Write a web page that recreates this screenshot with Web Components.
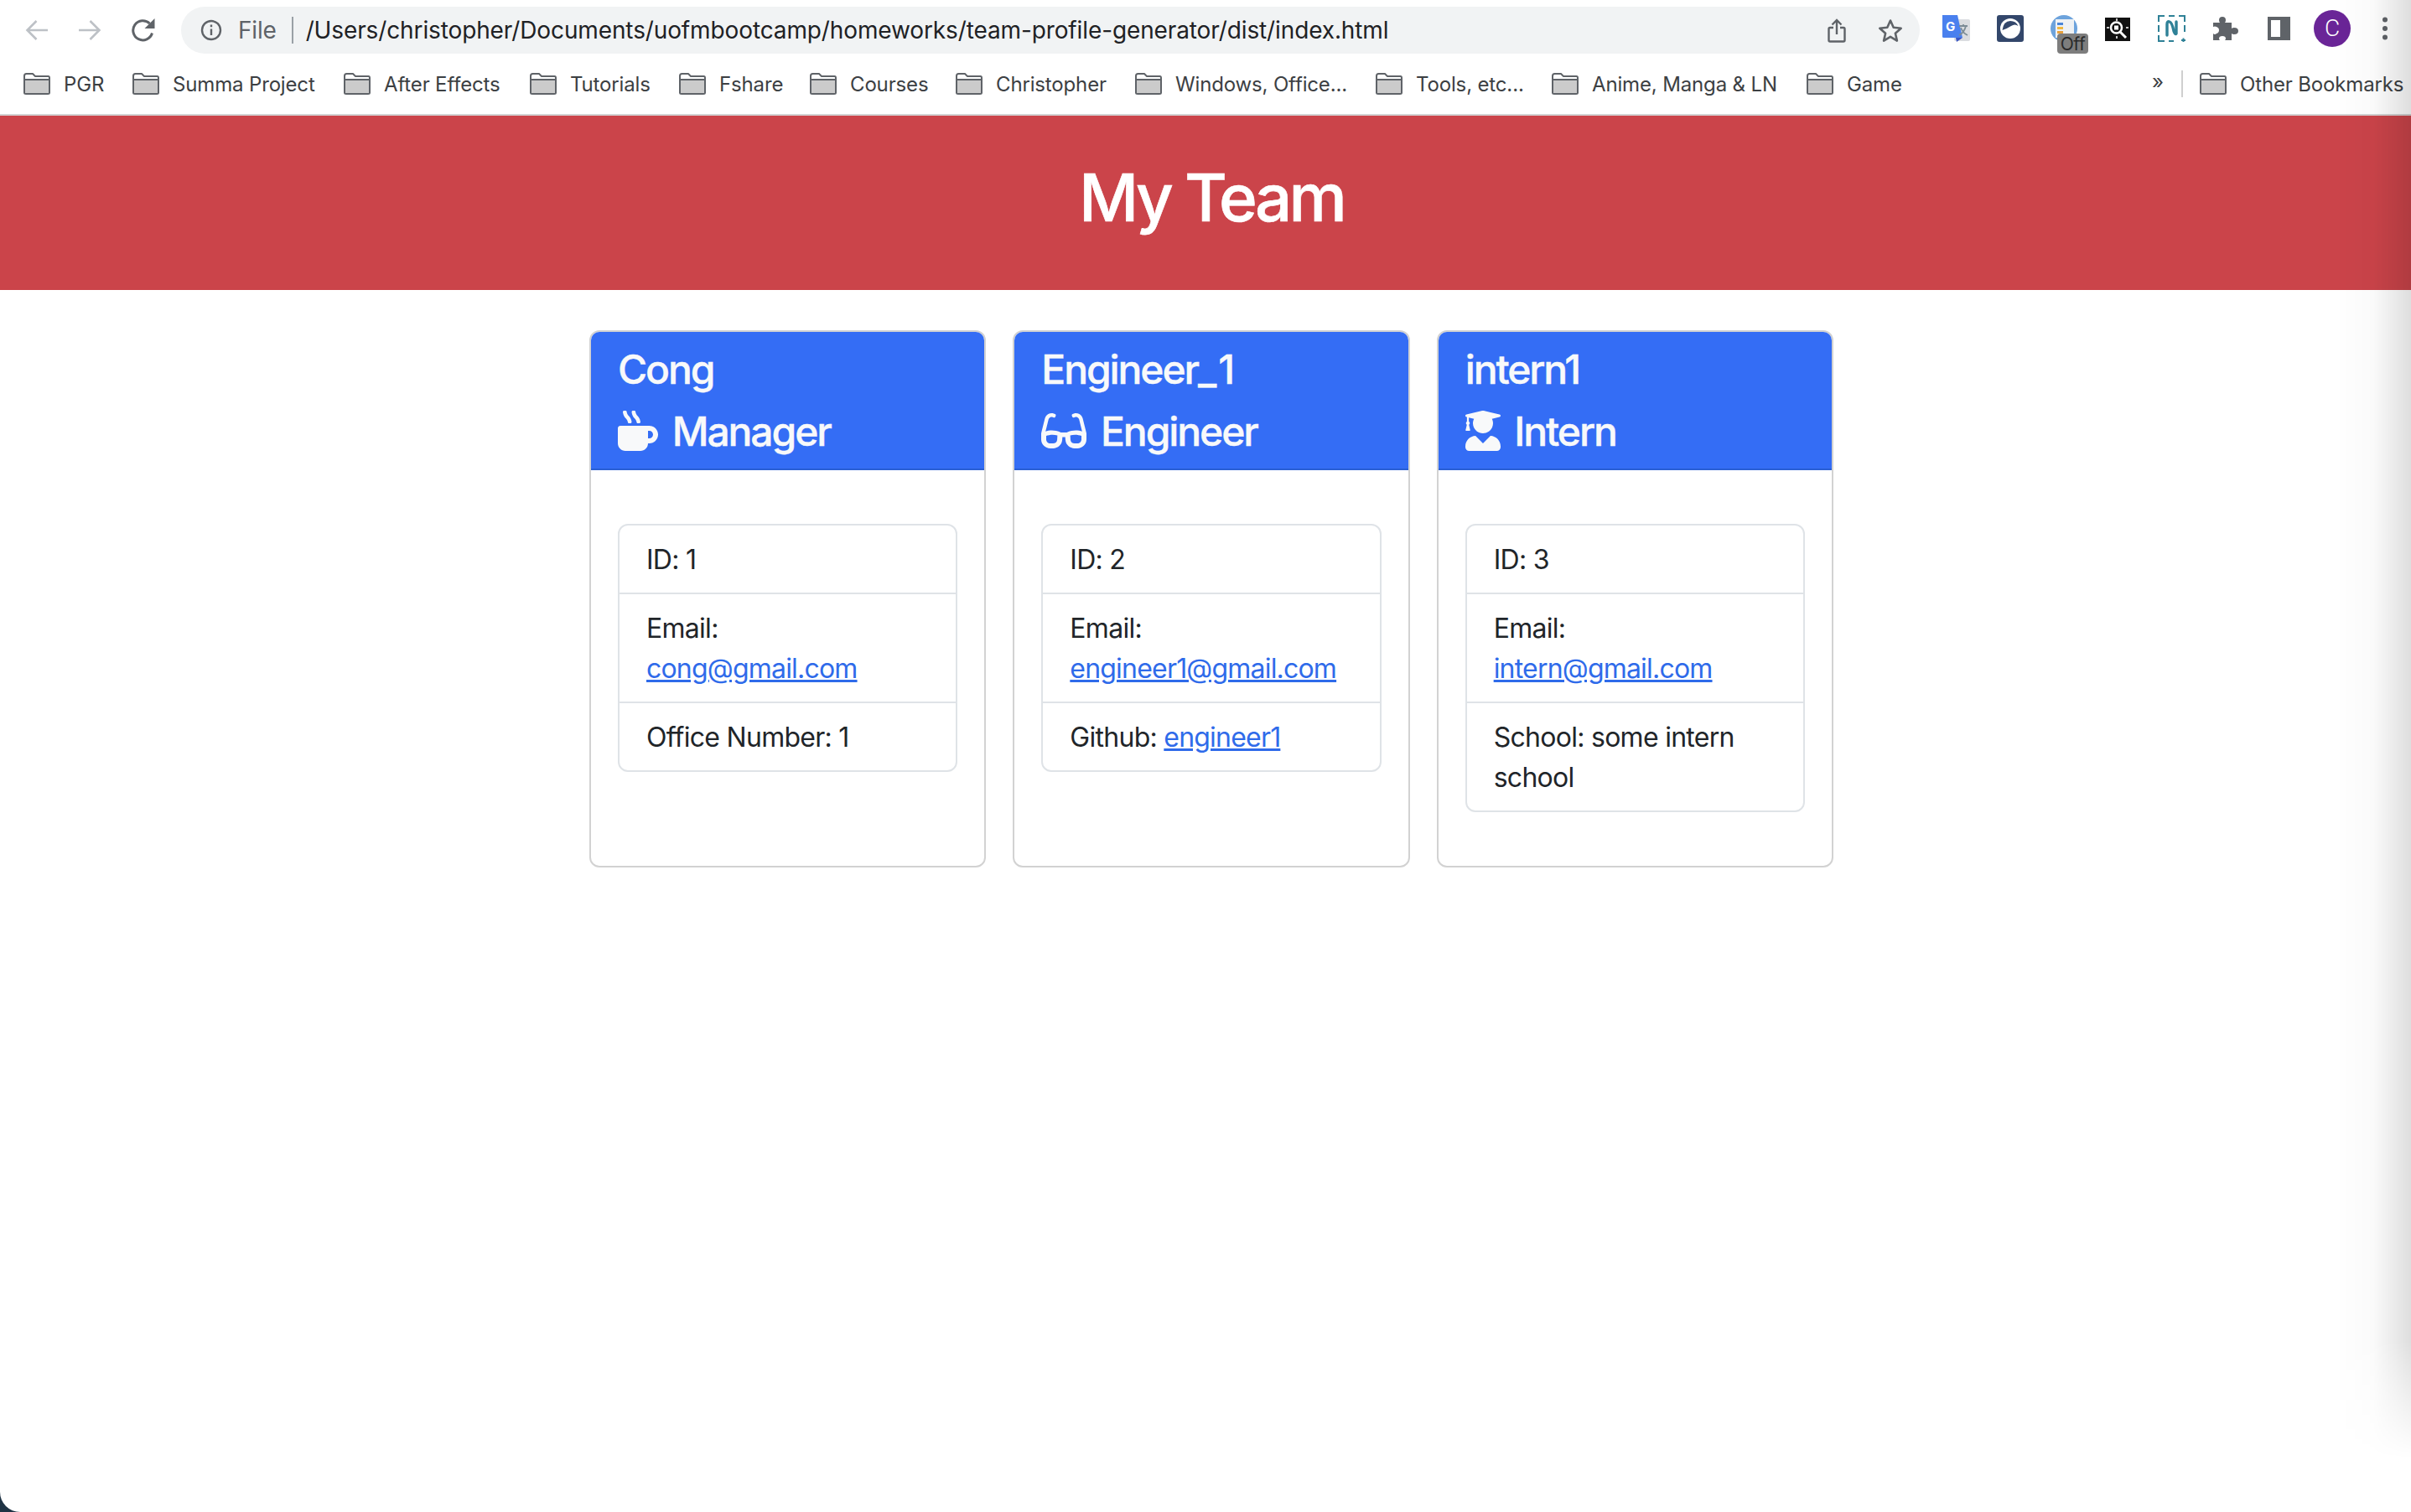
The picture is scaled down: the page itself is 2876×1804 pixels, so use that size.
<!DOCTYPE html>
<html>
<head>
<meta charset="utf-8">
<title>My Team</title>
<style>
  html, body { margin: 0; padding: 0; height: 100%; background: #1f3344; overflow: hidden; }
  body { font-family: Inter, "Liberation Sans", sans-serif; }
</style>
</head>
<body>
<app-window>
  <browser-bar slot="bar"></browser-bar>
  <team-page>
    <team-card name="Cong" role="Manager" icon="mug">
      <info-item>ID: 1</info-item>
      <info-item>Email: <a href="#">cong@gmail.com</a></info-item>
      <info-item>Office Number: 1</info-item>
    </team-card>
    <team-card name="Engineer_1" role="Engineer" icon="glasses">
      <info-item>ID: 2</info-item>
      <info-item>Email: <a href="#">engineer1@gmail.com</a></info-item>
      <info-item>Github: <a href="#">engineer1</a></info-item>
    </team-card>
    <team-card name="intern1" role="Intern" icon="grad">
      <info-item>ID: 3</info-item>
      <info-item>Email: <a href="#">intern@gmail.com</a></info-item>
      <info-item>School: some intern school</info-item>
    </team-card>
  </team-page>
</app-window>

<script>
// rounded mac window, with the shadow over the right edge
class AppWindow extends HTMLElement {
  constructor() {
    super();
    this.attachShadow({ mode: "open" });
    this.shadowRoot.innerHTML = `
      <style>
        :host { display: block; height: 1804px; width: 2876px; position: relative; overflow: hidden;
          background: #fff; border-radius: 0 0 0 24px; }
        .edge { position: absolute; top: 0; right: 0; bottom: 0; width: 90px; pointer-events: none;
          background: linear-gradient(to right, rgba(0,0,0,0), rgba(0,0,0,.02) 50%, rgba(0,0,0,.13));
          -webkit-mask-image: linear-gradient(to bottom, #000 1600px, transparent 1740px);
          mask-image: linear-gradient(to bottom, #000 1600px, transparent 1740px); }
      </style>
      <slot name="bar"></slot>
      <slot></slot>
      <div class="edge"></div>
    `;
  }
}
customElements.define("app-window", AppWindow);

const FOLDER = `<svg width="32" height="26" viewBox="0 0 32 26"><path d="M1 3.5Q1 1 3.5 1H11l3 3h15.5Q31 4 31 6v17.5Q31 25 29 25H3Q1 25 1 23.5Z" fill="#fff" stroke="#5f6368" stroke-width="2"/><path d="M2 8h28" stroke="#5f6368" stroke-width="2"/><rect x="2" y="9" width="28" height="15" fill="#cbcbcb"/></svg>`;

class BookmarkItem extends HTMLElement {
  constructor() {
    super();
    this.attachShadow({ mode: "open" });
  }
  connectedCallback() {
    this.shadowRoot.innerHTML = `
      <style>
        :host { display: flex; align-items: center; gap: 16px; flex: none; width: ${this.getAttribute("w") || "auto"};
          font-size: 24px; color: #3c4043; white-space: nowrap; letter-spacing: -.15px; }
        svg { flex: none; }
      </style>
      ${FOLDER}<slot></slot>
    `;
  }
}
customElements.define("bookmark-item", BookmarkItem);

class BrowserBar extends HTMLElement {
  constructor() {
    super();
    this.attachShadow({ mode: "open" });
    this.shadowRoot.innerHTML = `
      <style>
        :host { display: block; height: 136px; background: #fff; border-bottom: 2px solid #d3d3d3;
          font-family: Inter, "Liberation Sans", sans-serif; }
        .top { display: flex; align-items: center; height: 72px; padding-left: 30px; }
        .nav { display: flex; gap: 35px; align-items: center; width: 186px; flex: none; }
        .pill { flex: none; width: 2074px; height: 56px; border-radius: 28px; background: #f1f3f4;
          display: flex; align-items: center; padding-left: 23px; box-sizing: border-box; }
        .file { font-size: 28px; color: #5f6368; margin-left: 19px; letter-spacing: -.2px; }
        .sep { width: 2px; height: 32px; background: #9aa0a6; margin: 0 15px 0 18px; }
        .url { font-size: 28px; color: #202124; letter-spacing: -.12px; white-space: nowrap; flex: 1; }
        .pill-end { display: flex; gap: 38px; align-items: center; padding-right: 20px; }
        .ext { display: flex; align-items: center; position: absolute; left: 2317px; top: 8px; height: 56px; }
        .ext > * { flex: none; }
        .off { position: absolute; left: 137px; top: 32px; width: 37px; height: 24px; border-radius: 4px; background: #7d7d7d;
          color: #2a2a2a; font-size: 21px; line-height: 25px; text-align: center; letter-spacing: -.4px; }
        .avatar { width: 44px; height: 44px; border-radius: 50%; background: #6a2597; color: #fff; font-family: Roboto, sans-serif;
          font-size: 28px; font-weight: 300; line-height: 44px; text-align: center; margin-left: 28px; }
        .rows { display: flex; align-items: center; height: 56px; padding-left: 28px; position: relative; }
        .more { position: absolute; left: 2567px; top: 11px; font-size: 24px; color: #3c4043; }
        .vline { position: absolute; left: 2602px; top: 12px; width: 2px; height: 32px; background: #cfcfcf; }
        .other { position: absolute; left: 2624px; top: 0; height: 56px; display: flex; }
      </style>
      <div class="top">
        <div class="nav">
          <svg width="28" height="26" viewBox="0 0 28 26" fill="none" stroke="#bdc1c6" stroke-width="2.6"><path d="M27 13H3M13.500 2 2.500 13l11 11"/></svg>
          <svg width="28" height="26" viewBox="0 0 28 26" fill="none" stroke="#bdc1c6" stroke-width="2.6"><path d="M1 13h24M14.500 2l11 11-11 11"/></svg>
          <svg width="30" height="28" viewBox="0 0 30 28"><path d="M25.500 17.500A11.600 11.600 0 1 1 22.500 6" fill="none" stroke="#5f6368" stroke-width="3"/><path d="M28.500 0v12h-12z" fill="#5f6368"/></svg>
        </div>
        <div class="pill">
          <svg width="26" height="26" viewBox="0 0 26 26" fill="none" stroke="#5f6368" stroke-width="2.400"><circle cx="13" cy="13" r="11"/><path d="M13 11.500V19M13 6.500v2.800"/></svg>
          <span class="file">File</span><span class="sep"></span>
          <span class="url">/Users/christopher/Documents/uofmbootcamp/homeworks/team-profile-generator/dist/index.html</span>
          <div class="pill-end">
            <svg width="22" height="29" viewBox="0 0 22 29" fill="none" stroke="#5f6368" stroke-width="2.400"><path d="M7 11H3Q1.500 11 1.500 12.500V26Q1.500 27.500 3 27.500H19Q20.500 27.500 20.500 26V12.500Q20.500 11 19 11H15M11 19V2M5.500 7.500 11 2l5.500 5.500"/></svg>
            <svg width="30" height="29" viewBox="0 0 30 29" fill="none" stroke="#5f6368" stroke-width="2.600" stroke-linejoin="round"><path d="M15 2.500l3.700 8.300 9 .9-6.800 6 2 8.900L15 21.900 7.100 26.600l2-8.900-6.800-6 9-.9z"/></svg>
          </div>
        </div>
        <div class="ext">
          <svg width="33" height="33" viewBox="0 0 33 33" style="margin-top:-4px"><rect x="14" y="5" width="19" height="26" rx="2" fill="#dadce0"/><path d="M0 0h18l6 27H1.500Q0 27 0 25.500z" fill="#4a80ee"/><path d="M16 27h8l-7 5z" fill="#3a55c4"/><text x="4" y="19" font-family="Inter" font-weight="700" font-size="15" fill="#fff">G</text><path d="M20 13h10M25 11v2M28 13q-2 8-8 11M22 15q2 6 8 9" fill="none" stroke="#7c8c96" stroke-width="1.800"/></svg>
          <svg width="32" height="32" viewBox="0 0 32 32" style="margin-left:32px;margin-top:-4px"><rect width="32" height="32" rx="3" fill="#33476b"/><circle cx="16" cy="16" r="12" fill="#fff"/><path d="M6.500 18Q8 7 16 7q7 0 9.500 6-4-3-8.500 0t-10.500 5z" fill="#33476b"/></svg>
          <svg width="32" height="32" viewBox="0 0 32 32" style="margin-left:32px;margin-top:-4px"><circle cx="16" cy="16" r="16" fill="#6da3dc"/><rect x="6" y="5" width="22" height="22" fill="#eef1f4"/><rect x="8" y="9" width="7" height="3" fill="#4a86d8"/><rect x="8" y="14" width="7" height="3" fill="#f0b840"/><rect x="8" y="19" width="7" height="3" fill="#e8a03c"/></svg>
          <span class="off">Off</span>
          <svg width="30" height="28" viewBox="0 0 30 28" style="margin-left:33px;margin-top:-3px"><rect width="30" height="28" fill="#111"/><circle cx="13.500" cy="12" r="6.500" fill="none" stroke="#fff" stroke-width="2.500"/><rect x="11" y="9.500" width="5" height="5" fill="#fff"/><path d="M18 17l7 7" stroke="#fff" stroke-width="3"/><path d="M14 1v3M2 12h3M25 12h3M14 22v3" stroke="#fff" stroke-width="1.500"/></svg>
          <svg width="33" height="32" viewBox="0 0 33 32" style="margin-left:33px;margin-top:-4px" fill="none" stroke="#2f8197"><path d="M1 8V1h7M25 1h7v7M1 24v7h7M13 1h7M13 31h6M1 12v8M32 12v8" stroke-width="2"/><path d="M28 30h5M30.500 27.500v5" stroke-width="2"/><path d="M11 24V11q0-4 3-3t5 11q2 5 3 3V8" stroke-width="3.400" stroke-linecap="round"/></svg>
          <svg width="30" height="28" viewBox="0 0 30 28" style="margin-left:33px;margin-top:-4px"><path d="M0 7h8q-1-1-1-3 0-4 4-4t4 4q0 2-1 3h8v7q1-1 3-1 5 0 5 4t-5 4q-2 0-3-1v8H14q1-1 1-2 0-3-4-3t-4 3q0 1 1 2H0v-8q2 2 4 0 3-1 3-4t-3-4q-2-1-4 0z" fill="#5f6368"/></svg>
          <svg width="27" height="28" viewBox="0 0 27 28" style="margin-left:35px;margin-top:-4px"><path fill-rule="evenodd" d="M0 0h27v28H0zM4 4v20h11V4z" fill="#5f6368"/></svg>
          <span class="avatar" style="margin-top:-4px">C</span>
          <svg width="8" height="28" viewBox="0 0 8 28" style="margin-left:37px;margin-top:-4px" fill="#5f6368"><circle cx="4" cy="3.500" r="3"/><circle cx="4" cy="14" r="3"/><circle cx="4" cy="24.500" r="3"/></svg>
        </div>
      </div>
      <div class="rows">
        <slot></slot>
        <span class="more">»</span><span class="vline"></span>
        <div class="other"><bookmark-item>Other Bookmarks</bookmark-item></div>
      </div>
    `;
  }
  connectedCallback() {
    const list = [["PGR","130px"],["Summa Project","252px"],["After Effects","222px"],["Tutorials","178px"],["Fshare","156px"],["Courses","174px"],["Christopher","214px"],["Windows, Office...","287px"],["Tools, etc...","210px"],["Anime, Manga & LN","304px"],["Game","auto"]];
    list.forEach(([t, w]) => {
      const b = document.createElement("bookmark-item");
      b.setAttribute("w", w);
      b.textContent = t;
      this.appendChild(b);
    });
  }
}
customElements.define("browser-bar", BrowserBar);

// page is a bit wider than the shot, so the content centre sits right of the middle
class TeamPage extends HTMLElement {
  constructor() {
    super();
    this.attachShadow({ mode: "open" });
    this.shadowRoot.innerHTML = `
      <style>
        :host { display: block; width: 2890px; font-family: Inter, "Liberation Sans", sans-serif; }
        header { background: #cb444a; color: #fff; padding: 50px 0 46px; text-align: center; }
        h1 { margin: 0 0 16px; font-size: 78px; line-height: 96px; font-weight: 500; letter-spacing: -3.8px; -webkit-text-stroke: .6px #fff; }
        .row { display: flex; gap: 32px; width: 1484px; margin: 48px auto 0; align-items: stretch; }
      </style>
      <header><h1>My Team</h1></header>
      <div class="row"><slot></slot></div>
    `;
  }
}
customElements.define("team-page", TeamPage);

const ICONS = {
  mug: ["0 0 512 512", "M127.1 146.5c1.3 7.7 8 13.5 16 13.5h16.5c9.8 0 17.6-8.5 16.3-18-3.800-28.200-16.400-54.200-36.600-74.700-14.400-14.700-23.600-33.300-26.400-53.500C111.800 5.900 105 0 96.800 0H80.400C70.600 0 63 8.500 64.100 18c3.900 31.900 18 61.300 40.600 84.400 12 12.200 19.700 27.500 22.400 44.100zm112 0c1.300 7.700 8 13.500 16 13.500h16.500c9.800 0 17.600-8.500 16.300-18-3.800-28.200-16.400-54.200-36.600-74.700-14.400-14.700-23.600-33.300-26.400-53.500C223.800 5.900 217 0 208.800 0h-16.400c-9.800 0-17.500 8.500-16.300 18 3.900 31.900 18 61.300 40.600 84.400 12 12.200 19.700 27.500 22.400 44.100zM400 192H32c-17.700 0-32 14.300-32 32v192c0 53 43 96 96 96h192c53 0 96-43 96-96h16c61.800 0 112-50.200 112-112s-50.200-112-112-112zm0 160h-16v-96h16c26.500 0 48 21.500 48 48s-21.500 48-48 48z"],
  glasses: ["0 0 576 512", "M574.100 280.370L528.750 98.660c-5.910-23.700-21.590-44.050-43-55.810-21.440-11.730-46.970-14.110-70.190-6.330l-15.250 5.080c-8.390 2.790-12.920 11.860-10.120 20.240l5.060 15.180c2.790 8.380 11.850 12.910 20.230 10.120l13.180-4.390c10.870-3.620 23-3.570 33.160 1.730 10.290 5.370 17.570 14.560 20.370 25.820l38.460 153.820c-22.190-6.810-49.790-12.460-81.200-12.460-34.770 0-73.980 7.020-114.850 26.740h-73.180c-40.870-19.740-80.080-26.750-114.860-26.750-31.420 0-59.020 5.650-81.210 12.460l38.460-153.830c2.790-11.250 10.090-20.450 20.380-25.810 10.160-5.300 22.280-5.350 33.150-1.730l13.170 4.390c8.380 2.790 17.440-1.740 20.230-10.120l5.060-15.180c2.800-8.380-1.730-17.450-10.120-20.240l-15.250-5.080c-23.220-7.780-48.750-5.410-70.190 6.330-21.410 11.770-37.090 32.110-43 55.800L1.900 280.370A64.218 64.218 0 0 0 0 295.860v70.250C0 429.640 51.580 480 115.200 480h37.120c60.280 0 110.370-45.940 114.880-105.370l2.930-38.630h35.750l2.930 38.630C313.310 434.060 363.400 480 423.680 480h37.120c63.620 0 115.200-50.360 115.200-113.890v-70.250c0-5.230-.64-10.430-1.900-15.490zM203.380 369.800c-2 26.430-24.780 47.200-52.010 47.200H115.200C86.520 417 64 394.540 64 366.110v-45.410c20.840-7.320 49.580-14.610 82.270-14.610 20.480 0 40.590 2.990 60.290 8.790l-3.180 54.920zm308.620-3.690c0 28.430-22.520 50.890-51.200 50.890h-36.170c-27.230 0-50.010-20.770-52.010-47.200l-3.180-54.920c19.700-5.800 39.810-8.790 60.290-8.790 32.690 0 61.430 7.290 82.270 14.610v45.410z"],
  grad: ["0 0 448 512", "M319.400 320.600L224 416l-95.400-95.400C57.100 323.700 0 382.200 0 454.400v9.600c0 26.500 21.500 48 48 48h352c26.500 0 48-21.500 48-48v-9.600c0-72.200-57.100-130.700-128.600-133.800zM13.600 79.800l6.400 1.500v58.400c-7 4.200-12 11.500-12 20.300 0 8.400 4.600 15.400 11.100 19.700L3.500 242c-1.700 6.900 2.100 14 7.600 14h41.800c5.500 0 9.300-7.100 7.600-14l-15.600-62.300C51.400 175.400 56 168.400 56 160c0-8.800-5-16.100-12-20.300V87.100l66 15.900c-8.600 17.200-14 36.400-14 57 0 70.700 57.300 128 128 128s128-57.300 128-128c0-20.600-5.300-39.800-14-57l96.300-23.200c18.200-4.400 18.200-27.100 0-31.500l-190.400-46c-13-3.100-26.700-3.100-39.700 0L13.600 48.200c-18.100 4.400-18.100 27.200 0 31.600z"]
};

class TeamCard extends HTMLElement {
  constructor() {
    super();
    this.attachShadow({ mode: "open" });
  }
  connectedCallback() {
    const [box, d] = ICONS[this.getAttribute("icon")];
    const w = parseInt(box.split(" ")[2]) / 512 * 48;
    const name = this.getAttribute("name").replace("_", '<span class="us">_</span>');
    this.shadowRoot.innerHTML = `
      <style>
        :host { display: flex; flex-direction: column; flex: 1 1 0; min-width: 0; box-sizing: border-box;
          border: 2px solid #d2d2d2; border-radius: 12px; overflow: hidden; background: #fff; }
        .head { background: #346df5; color: #f8f9fa; padding: 16px 32px; border-bottom: 2px solid #2a5fd4; }
        h4 { margin: 0; font-size: 48px; line-height: 57.600px; font-weight: 500; letter-spacing: -2.1px; -webkit-text-stroke: .4px #f8f9fa; }
        h4 + h4 { margin-top: 16px; }
        .us { letter-spacing: 2px; }
        svg { vertical-align: -6px; margin-right: 6px; }
        .body { padding: 32px; }
        .list { margin: 32px 0; border: 2px solid #dfe3e7; border-radius: 12px; overflow: hidden; }
      </style>
      <div class="head">
        <h4>${name}</h4>
        <h4><svg width="${w}" height="48" viewBox="${box}" fill="#f8f9fa"><path d="${d}"/></svg> ${this.getAttribute("role")}</h4>
      </div>
      <div class="body"><div class="list"><slot></slot></div></div>
    `;
  }
}
customElements.define("team-card", TeamCard);

class InfoItem extends HTMLElement {
  constructor() {
    super();
    this.attachShadow({ mode: "open" });
    this.shadowRoot.innerHTML = `
      <style>
        :host { display: block; padding: 17px 32px 15px; font-size: 32px; line-height: 48px; color: #212529; letter-spacing: -.72px; }
        :host(:not(:first-child)) { border-top: 2px solid #dfe3e7; }
        ::slotted(a) { color: #2f6bea; text-decoration: underline; letter-spacing: -.8px; }
      </style>
      <slot></slot>
    `;
  }
}
customElements.define("info-item", InfoItem);
</script>
</body>
</html>
